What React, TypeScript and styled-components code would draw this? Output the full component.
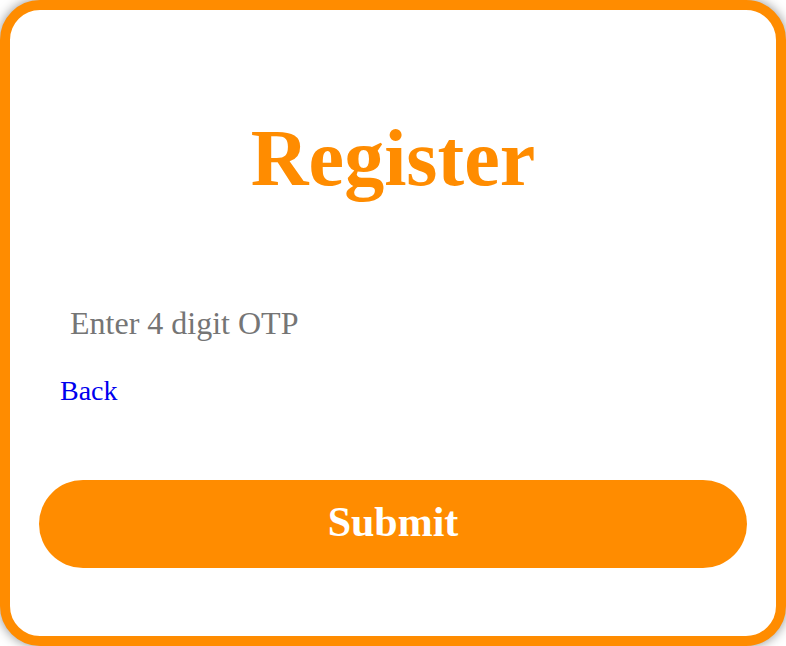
import React from "react";
import styled, { createGlobalStyle } from "styled-components";

const Global = createGlobalStyle`
  html, body { margin: 0; padding: 0; background: #ffffff; }
  body { font-family: "Liberation Serif", "Times New Roman", serif; }
  * { box-sizing: border-box; }
`;

const Card = styled.div`
  width: 786px;
  height: 646px;
  border: 10px solid #ff8c00;
  border-radius: 40px;
  background: #ffffff;
  box-shadow: 0 0 12px rgba(0, 0, 0, 0.45);
  display: flex;
  flex-direction: column;
  overflow: hidden;
`;

const Title = styled.h1`
  margin: 103px 0 0;
  text-align: center;
  font-size: 80px;
  font-weight: bold;
  line-height: normal;
  color: #ff8c00;
`;

const OtpInput = styled.input`
  margin: 101px 0 0 50px;
  width: 660px;
  padding: 0 10px;
  border: none;
  outline: none;
  background: transparent;
  font-family: "Liberation Serif", "Times New Roman", serif;
  font-size: 32px;
  line-height: normal;
  height: 36px;
  color: #000;
  &::placeholder { color: #757575; }
`;

const BackLink = styled.a`
  margin: 34px 0 0 50px;
  align-self: flex-start;
  font-size: 28px;
  line-height: normal;
  color: #0000ee;
  text-decoration: none;
`;

const SubmitButton = styled.button`
  margin: 73px 0 0 29px;
  width: 708px;
  height: 88px;
  padding: 0 0 4px;
  border: none;
  border-radius: 44px;
  background: #ff8c00;
  color: #ffffff;
  font-family: "Liberation Serif", "Times New Roman", serif;
  font-size: 42px;
  font-weight: bold;
  cursor: pointer;
`;

export default function App() {
  return (
    <>
      <Global />
      <Card>
        <Title>Register</Title>
        <OtpInput placeholder="Enter 4 digit OTP" />
        <BackLink href="#">Back</BackLink>
        <SubmitButton>Submit</SubmitButton>
      </Card>
    </>
  );
}
